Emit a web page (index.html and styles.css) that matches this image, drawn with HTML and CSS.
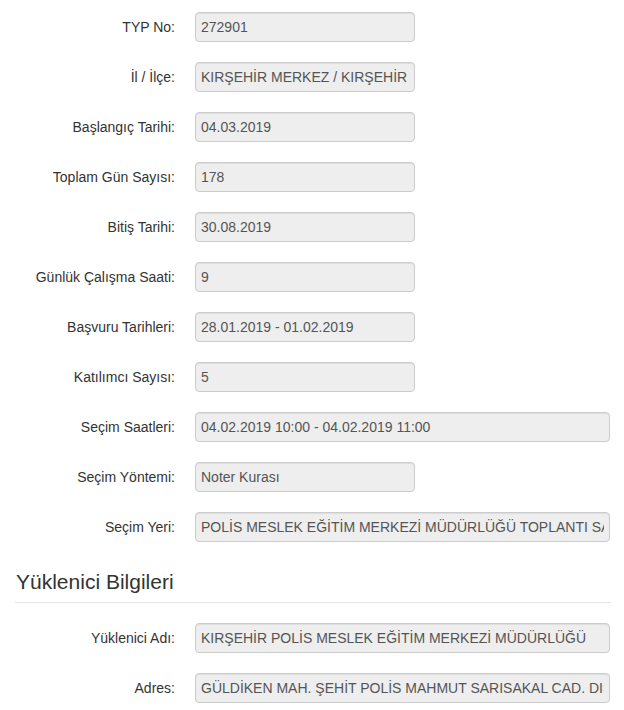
FILE: index.html
```html
<!DOCTYPE html>
<html lang="tr">
<head>
    <meta charset="UTF-8">
    <title>İlan Detayı</title>
    <link rel="stylesheet" href="styles.css">
</head>
<body>
<!-- Genel bilgiler -->
<div class="form-list">
    <div class="form-row">
        <label>TYP No:</label>
        <input class="field" type="text" value="272901" readonly>
    </div>
    <div class="form-row">
        <label>İl / İlçe:</label>
        <input class="field" type="text" value="KIRŞEHİR MERKEZ / KIRŞEHİR" readonly>
    </div>
    <div class="form-row">
        <label>Başlangıç Tarihi:</label>
        <input class="field" type="text" value="04.03.2019" readonly>
    </div>
    <div class="form-row">
        <label>Toplam Gün Sayısı:</label>
        <input class="field" type="text" value="178" readonly>
    </div>
    <div class="form-row">
        <label>Bitiş Tarihi:</label>
        <input class="field" type="text" value="30.08.2019" readonly>
    </div>
    <div class="form-row">
        <label>Günlük Çalışma Saati:</label>
        <input class="field" type="text" value="9" readonly>
    </div>
    <div class="form-row">
        <label>Başvuru Tarihleri:</label>
        <input class="field" type="text" value="28.01.2019 - 01.02.2019" readonly>
    </div>
    <div class="form-row">
        <label>Katılımcı Sayısı:</label>
        <input class="field" type="text" value="5" readonly>
    </div>
    <div class="form-row">
        <label>Seçim Saatleri:</label>
        <input class="field wide" type="text" value="04.02.2019 10:00 - 04.02.2019 11:00" readonly>
    </div>
    <div class="form-row">
        <label>Seçim Yöntemi:</label>
        <input class="field" type="text" value="Noter Kurası" readonly>
    </div>
    <div class="form-row">
        <label>Seçim Yeri:</label>
        <input class="field wide" type="text" value="POLİS MESLEK EĞİTİM MERKEZİ MÜDÜRLÜĞÜ TOPLANTI SALONU" readonly>
    </div>
</div>

<!-- Yüklenici bilgileri -->
<h4 class="legend">Yüklenici Bilgileri</h4>
<div class="form-list">
    <div class="form-row">
        <label>Yüklenici Adı:</label>
        <input class="field wide" type="text" value="KIRŞEHİR POLİS MESLEK EĞİTİM MERKEZİ MÜDÜRLÜĞÜ" readonly>
    </div>
    <div class="form-row">
        <label>Adres:</label>
        <input class="field wide" type="text" value="GÜLDİKEN MAH. ŞEHİT POLİS MAHMUT SARISAKAL CAD. DIŞ KAPI NO: 2" readonly>
    </div>
</div>
</body>
</html>
```

FILE: styles.css
```css
body {
    margin: 0;
    background: #fff;
    font-family: "Liberation Sans", Arial, sans-serif;
    font-size: 14px;
    color: #333;
}

.form-list {
    display: flex;
    flex-direction: column;
    gap: 20px;
    padding-top: 12px;
}

.form-row {
    display: grid;
    grid-template-columns: 175px auto;
    column-gap: 20px;
    align-items: center;
    justify-items: start;
}

.form-row label {
    justify-self: end;
    text-align: right;
}

.field {
    box-sizing: border-box;
    width: 220px;
    height: 30px;
    margin: 0;
    padding: 0 5px;
    font-family: inherit;
    font-size: 14px;
    color: #555;
    background-color: #eee;
    border: 1px solid #ccc;
    border-radius: 4px;
    box-shadow: inset 0 1px 1px rgba(0, 0, 0, .075);
    outline: none;
}

.field.wide {
    width: 415px;
}

.legend {
    margin: 28px 13px 0 15px;
    padding: 0 0 9px 1px;
    font-size: 21px;
    font-weight: normal;
    line-height: 23px;
    color: #333;
    border-bottom: 1px solid #e5e5e5;
}

.legend + .form-list {
    padding-top: 20px;
}
```
